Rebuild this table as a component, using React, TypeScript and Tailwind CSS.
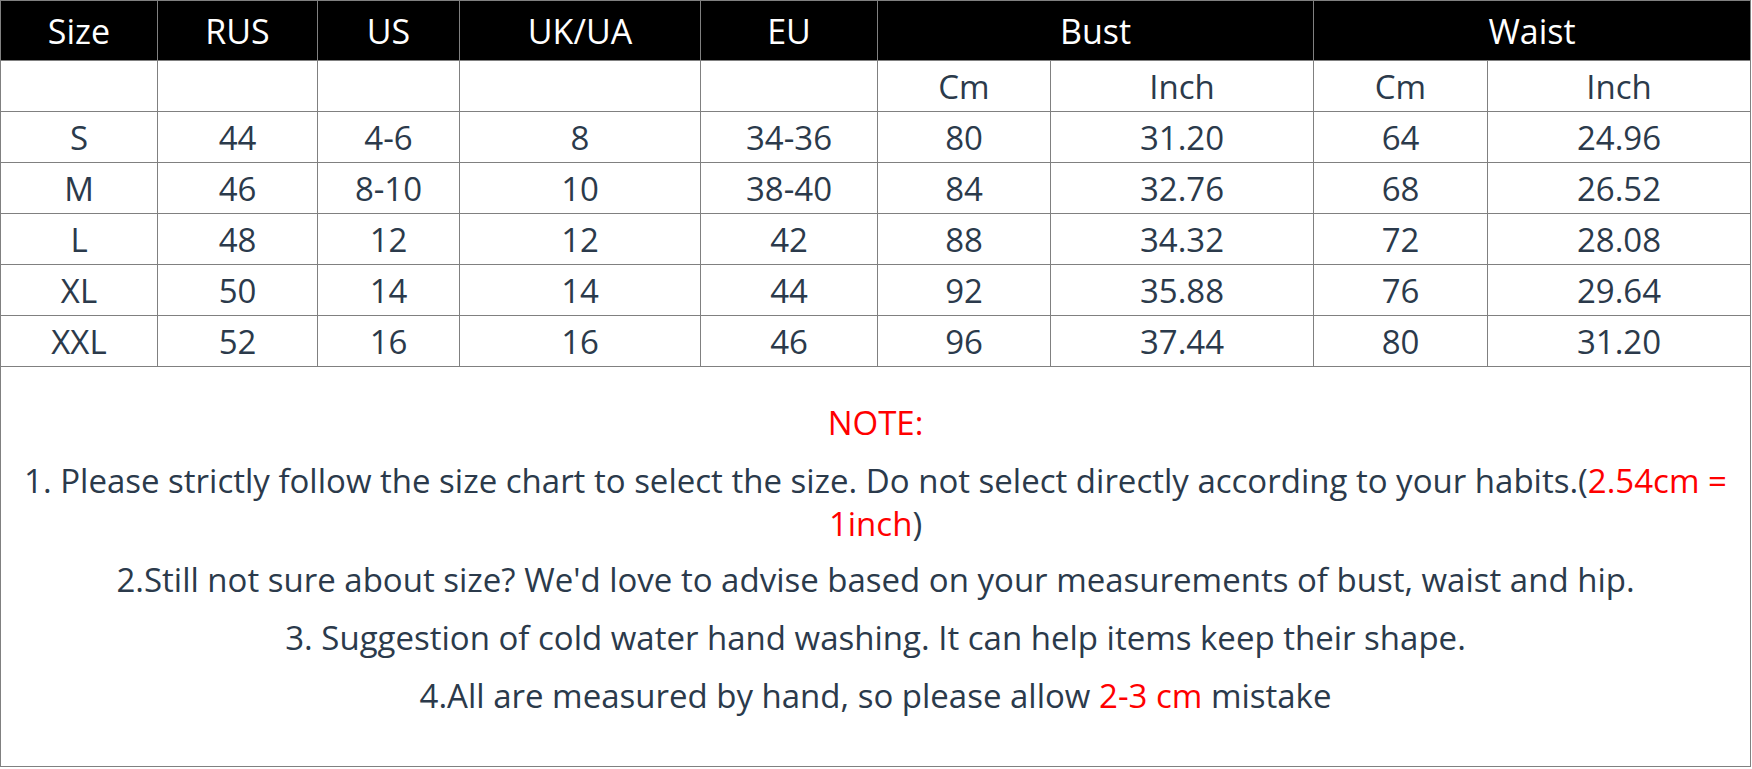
import React from "react";

const rows = [
  ["S", "44", "4-6", "8", "34-36", "80", "31.20", "64", "24.96"],
  ["M", "46", "8-10", "10", "38-40", "84", "32.76", "68", "26.52"],
  ["L", "48", "12", "12", "42", "88", "34.32", "72", "28.08"],
  ["XL", "50", "14", "14", "44", "92", "35.88", "76", "29.64"],
  ["XXL", "52", "16", "16", "46", "96", "37.44", "80", "31.20"],
];

const H = ({ children, span }: { children: React.ReactNode; span?: boolean }) => (
  <div
    className={`bg-black text-white text-[34px] flex items-center justify-center h-[59px] ${span ? "col-span-2" : ""}`}
  >
    {children}
  </div>
);

const C = ({ children }: { children?: React.ReactNode }) => (
  <div className="bg-white flex items-center justify-center h-[50px]">{children}</div>
);

export default function App() {
  return (
    <div className="w-[1752px] h-[769px] bg-white">
      <div
        className="w-[1751px] border border-[#808080] bg-[#808080] grid grid-cols-[156px_159px_141px_240px_176px_172px_262px_173px_262px] gap-px text-[#2b3a4b] text-[33px] leading-none"
        style={{ fontFamily: '"Open Sans", "Noto Sans", sans-serif' }}
      >
        <H>Size</H>
        <H>RUS</H>
        <H>US</H>
        <H>UK/UA</H>
        <H>EU</H>
        <H span>Bust</H>
        <H span>Waist</H>
        <C />
        <C />
        <C />
        <C />
        <C />
        <C>Cm</C>
        <C>Inch</C>
        <C>Cm</C>
        <C>Inch</C>
        {rows.map((r, i) => (
          <React.Fragment key={i}>
            {r.map((v, j) => (
              <C key={j}>{v}</C>
            ))}
          </React.Fragment>
        ))}
        <div className="col-span-9 bg-white h-[399px] flex flex-col items-center pt-[34px] px-[10px] text-center leading-[43px]">
          <p className="text-[#ff0000]">NOTE:</p>
          <p className="mt-[15px]">
            1. Please strictly follow the size chart to select the size. Do not select directly according to your habits.(
            <span className="text-[#ff0000]">2.54cm = 1inch</span>)
          </p>
          <p className="mt-[13px]">
            2.Still not sure about size? We'd love to advise based on your measurements of bust, waist and hip.
          </p>
          <p className="mt-[15px]">3. Suggestion of cold water hand washing. It can help items keep their shape.</p>
          <p className="mt-[15px]">
            4.All are measured by hand, so please allow <span className="text-[#ff0000]">2-3 cm</span> mistake
          </p>
        </div>
      </div>
    </div>
  );
}
